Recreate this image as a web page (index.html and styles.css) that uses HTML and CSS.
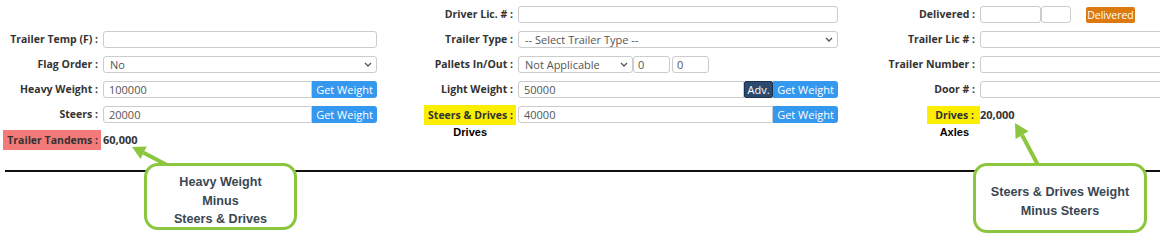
FILE: index.html
```html
<!DOCTYPE html>
<html>
<head>
<meta charset="utf-8">
<link rel="stylesheet" href="styles.css">
</head>
<body>
<div class="page">
  <div class="form">
    <div class="col col1">
      <div class="lbl"></div><div class="fld"></div>
      <div class="lbl">Trailer Temp (F) :</div><div class="fld"><input class="inp" type="text"></div>
      <div class="lbl">Flag Order :</div><div class="fld"><div class="sel"><span>No</span><svg class="chev" width="8" height="5" viewBox="0 0 8 5"><polyline points="1,1 4,4 7,1" fill="none" stroke="#555" stroke-width="1.3"/></svg></div></div>
      <div class="lbl">Heavy Weight :</div><div class="fld grp"><input class="inp grow" type="text" value="100000"><button class="btn-blue">Get Weight</button></div>
      <div class="lbl">Steers :</div><div class="fld grp"><input class="inp grow" type="text" value="20000"><button class="btn-blue">Get Weight</button></div>
      <div class="lbl"><span class="hl hl-red">Trailer Tandems :</span></div><div class="fld val">60,000</div>
    </div>
    <div class="col col2">
      <div class="lbl">Driver Lic. # :</div><div class="fld"><input class="inp" type="text"></div>
      <div class="lbl">Trailer Type :</div><div class="fld"><div class="sel"><span>-- Select Trailer Type --</span><svg class="chev" width="8" height="5" viewBox="0 0 8 5"><polyline points="1,1 4,4 7,1" fill="none" stroke="#555" stroke-width="1.3"/></svg></div></div>
      <div class="lbl">Pallets In/Out :</div><div class="fld grp pallets"><div class="sel sel-pal"><span>Not Applicable</span><svg class="chev" width="8" height="5" viewBox="0 0 8 5"><polyline points="1,1 4,4 7,1" fill="none" stroke="#555" stroke-width="1.3"/></svg></div><input class="inp small" type="text" value="0"><input class="inp small" type="text" value="0"></div>
      <div class="lbl">Light Weight :</div><div class="fld grp"><input class="inp grow" type="text" value="50000"><button class="btn-adv">Adv.</button><button class="btn-blue">Get Weight</button></div>
      <div class="lbl"><span class="hl hl-yel">Steers &amp; Drives :</span></div><div class="fld grp"><input class="inp grow" type="text" value="40000"><button class="btn-blue">Get Weight</button></div>
      <div class="lbl note note-drives">Drives</div><div class="fld"></div>
    </div>
    <div class="col col3">
      <div class="lbl">Delivered :</div><div class="fld grp deliv"><input class="inp d1" type="text"><input class="inp d2" type="text"><button class="btn-orange">Delivered</button></div>
      <div class="lbl">Trailer Lic # :</div><div class="fld"><input class="inp" type="text"></div>
      <div class="lbl">Trailer Number :</div><div class="fld"><input class="inp" type="text"></div>
      <div class="lbl">Door # :</div><div class="fld"><input class="inp" type="text"></div>
      <div class="lbl"><span class="hl hl-yel hl-drv">Drives :</span></div><div class="fld val">20,000</div>
      <div class="lbl note note-axles">Axles</div><div class="fld"></div>
    </div>
  </div>
  <div class="rule"></div>

  <svg class="arrows" width="1160" height="240" viewBox="0 0 1160 240">
    <line x1="167" y1="165" x2="143.6" y2="152.8" stroke="#8cc63f" stroke-width="4"/>
    <polygon points="132,147 146.7,146.5 140.5,159.1" fill="#8cc63f"/>
    <line x1="1038" y1="165" x2="1022.1" y2="135.1" stroke="#8cc63f" stroke-width="4"/>
    <polygon points="1015,123 1028.6,131.3 1015.6,138.9" fill="#8cc63f"/>
  </svg>
  <div class="callout callout-1">Heavy Weight<br>Minus<br>Steers &amp; Drives</div>
  <div class="callout callout-2">Steers &amp; Drives Weight<br>Minus Steers</div>
</div>
</body>
</html>
```

FILE: styles.css
```css
html, body {
  margin: 0;
  padding: 0;
  overflow: hidden;
  background: #fff;
}
body {
  font-family: "Open Sans", "Liberation Sans", sans-serif;
  width: 1160px;
  height: 240px;
}
.page {
  position: relative;
  width: 1160px;
  height: 240px;
}
.form {
  display: flex;
  padding-top: 6px;
}
.col {
  display: grid;
  grid-auto-rows: 17px;
  row-gap: 8px;
  column-gap: 5px;
}
.col1 {
  grid-template-columns: 98px 274px;
}
.col2 {
  margin-left: 13px;
  grid-template-columns: 123px 320px;
}
.col3 {
  margin-left: 12px;
  grid-template-columns: 125px 200px;
}
.lbl {
  display: flex;
  justify-content: flex-end;
  align-items: center;
  font-weight: 700;
  font-size: 10.5px;
  color: #333;
  line-height: 17px;
  white-space: nowrap;
}
.fld {
  display: flex;
  align-items: stretch;
  min-width: 0;
}
.inp {
  box-sizing: border-box;
  width: 100%;
  height: 17px;
  border: 1px solid #ccc;
  border-radius: 3px;
  background: #fff;
  font-family: "Open Sans", "Liberation Sans", sans-serif;
  font-size: 11px;
  color: #555;
  padding: 0 5px;
  margin: 0;
  outline: none;
}
.grp .grow {
  flex: 1;
  width: auto;
  min-width: 0;
  border-top-right-radius: 0;
  border-bottom-right-radius: 0;
}
.sel {
  box-sizing: border-box;
  width: 100%;
  height: 17px;
  border: 1px solid #ccc;
  border-radius: 3px;
  display: flex;
  align-items: center;
  justify-content: space-between;
  padding: 0 4px 0 6px;
  font-size: 11px;
  color: #555;
}
.chev {
  display: block;
}
.sel-pal {
  width: 115px;
  flex: none;
}
.pallets .small {
  width: 37px;
  flex: none;
  padding-left: 4px;
}
.pallets .small + .small {
  margin-left: 2px;
}
.btn-blue {
  flex: none;
  width: 65px;
  height: 17px;
  border: none;
  margin: 0;
  padding: 0;
  background: #3598ef;
  color: #fff;
  font-family: "Open Sans", "Liberation Sans", sans-serif;
  font-size: 11px;
  border-radius: 0 3px 3px 0;
}
.btn-adv {
  flex: none;
  box-sizing: border-box;
  width: 29px;
  height: 17px;
  margin: 0;
  padding: 0;
  border: 1px solid #1c3350;
  border-radius: 2px;
  background: #2c4a6d;
  color: #fff;
  font-family: "Open Sans", "Liberation Sans", sans-serif;
  font-size: 11px;
}
.deliv .d1 {
  width: 61px;
  flex: none;
}
.deliv .d2 {
  width: 30px;
  flex: none;
}
.btn-orange {
  flex: none;
  align-self: center;
  margin: 1px 0 0 15px;
  padding: 0;
  width: 49px;
  height: 16px;
  border: none;
  border-radius: 2px;
  background: #dc7a10;
  color: #fff;
  font-family: "Open Sans", "Liberation Sans", sans-serif;
  font-size: 10.5px;
}
.val {
  font-weight: 700;
  font-size: 11px;
  color: #333;
  line-height: 17px;
  align-items: center;
}
.hl {
  display: block;
  flex: none;
  padding: 2px 3px 2px 4px;
  margin-right: -3px;
  line-height: 16px;
}
.hl-red {
  background: #f47a7a;
}
.hl-yel {
  background: #fbee00;
}
.hl-drv {
  padding: 1px 6px 1px 8px;
  margin-right: -5px;
}
.note {
  font-family: "Liberation Sans", Arial, sans-serif;
  font-size: 11px;
  color: #000;
  align-items: flex-start;
  margin-top: -7px;
}
.note-drives {
  padding-right: 26px;
}
.note-axles {
  padding-right: 6px;
}
.rule {
  height: 2px;
  background: #111;
  margin: 22px 0 0 5px;
}
.arrows {
  position: absolute;
  left: 0;
  top: 0;
  pointer-events: none;
}
.callout {
  position: absolute;
  box-sizing: border-box;
  border: 3px solid #8cc63f;
  border-radius: 14px;
  background: #fff;
  font-family: "Liberation Sans", Arial, sans-serif;
  font-weight: 700;
  font-size: 12.6px;
  color: #3a4753;
  text-align: center;
}
.callout-1 {
  left: 144px;
  top: 163px;
  width: 153px;
  height: 67px;
  padding-top: 7px;
  line-height: 18.5px;
}
.callout-2 {
  left: 973px;
  top: 163px;
  width: 174px;
  height: 70px;
  padding-top: 17px;
  line-height: 19px;
}
```
